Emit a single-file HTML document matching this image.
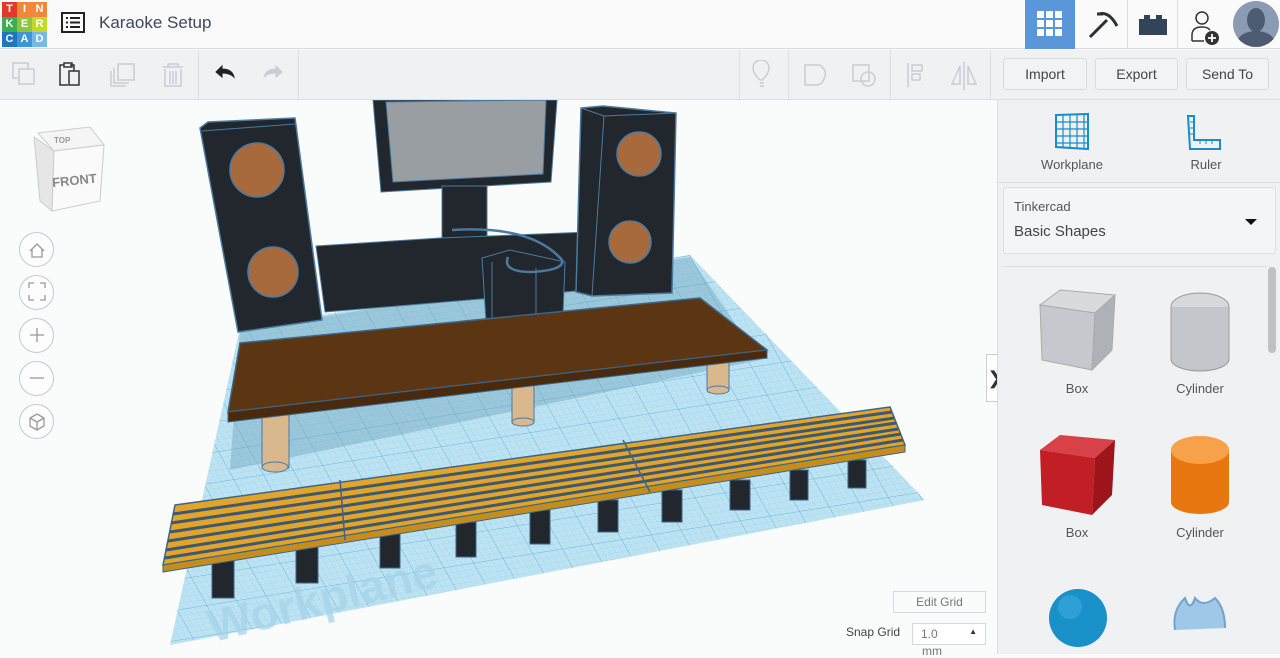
<!DOCTYPE html>
<html><head><meta charset="utf-8"><style>
*{box-sizing:border-box;margin:0;padding:0}
body{width:1280px;height:654px;overflow:hidden;font-family:"Liberation Sans",sans-serif;background:#fafbfb;position:relative;color:#333}
.hdr{position:absolute;left:0;top:0;width:1280px;height:49px;background:#fafafa;border-bottom:1px solid #d8dbdf}
.tb{position:absolute;left:0;top:50px;width:1280px;height:50px;background:#f0f1f3;border-bottom:1px solid #dadde1}
.sep{position:absolute;top:50px;width:1px;height:50px;background:#dcdfe3}
.btn{position:absolute;top:58px;height:32px;border:1px solid #d8dbe0;border-radius:3px;background:#f2f3f5;font-size:14px;color:#444;text-align:center;line-height:30px}
.rp{position:absolute;left:997px;top:100px;width:283px;height:554px;background:#f0f1f3;border-left:1px solid #dadde1}
.lbl{position:absolute;font-size:13px;color:#555;text-align:center;width:120px}
.nav{position:absolute;left:19px;width:35px;height:35px;border:1px solid #c5c9ce;border-radius:50%;background:#fdfdfd}
</style></head><body>
<div class="hdr"></div>
<div style="position:absolute;left:2px;top:2px;width:45px;height:45px;font:bold 11px 'Liberation Sans',sans-serif;color:#fff">
<div style="display:grid;grid-template-columns:repeat(3,15px);grid-template-rows:repeat(3,15px);text-align:center;line-height:15px">
<div style="background:#e2382b">T</div><div style="background:#f0873a">I</div><div style="background:#f0873a">N</div>
<div style="background:#3cae4f">K</div><div style="background:#8cc63f">E</div><div style="background:#c3d82b">R</div>
<div style="background:#1f75c0">C</div><div style="background:#3d95d6">A</div><div style="background:#76b9e6">D</div></div></div>
<svg style="position:absolute;left:61px;top:12px" width="24" height="22"><rect x="1" y="1" width="22" height="19" fill="none" stroke="#222" stroke-width="2"/><path d="M5 6h2M9 6h10M5 10.5h2M9 10.5h10M5 15h2M9 15h10" stroke="#222" stroke-width="2"/></svg>
<div style="position:absolute;left:99px;top:13px;font-size:17px;color:#3b4a5c">Karaoke Setup</div>
<div style="position:absolute;left:1025px;top:0;width:50px;height:49px;background:#5b96d8"></div>
<svg style="position:absolute;left:1037px;top:11px" width="26" height="26"><g fill="#fff"><rect x="0" y="0" width="7" height="7"/><rect x="9" y="0" width="7" height="7"/><rect x="18" y="0" width="7" height="7"/><rect x="0" y="9" width="7" height="7"/><rect x="9" y="9" width="7" height="7"/><rect x="18" y="9" width="7" height="7"/><rect x="0" y="18" width="7" height="7"/><rect x="9" y="18" width="7" height="7"/><rect x="18" y="18" width="7" height="7"/></g></svg>
<div style="position:absolute;left:1127px;top:0;width:1px;height:49px;background:#ddd"></div>
<div style="position:absolute;left:1177px;top:0;width:1px;height:49px;background:#ddd"></div>
<svg style="position:absolute;left:1085px;top:10px" width="34" height="30"><path d="M5 27L22 10M14 4q10-3 18 12M12 4l6 0" stroke="#2b2f36" stroke-width="3" fill="none"/></svg>
<svg style="position:absolute;left:1138px;top:13px" width="30" height="24"><path d="M1 6h5V2h6v4h6V2h6v4h5v16H1z" fill="#334458"/></svg>
<svg style="position:absolute;left:1190px;top:10px" width="36" height="36"><circle cx="12" cy="8" r="6" fill="none" stroke="#333" stroke-width="1.5"/><path d="M2 31v-6q0-8 10-8q6 0 8 3M2 31h12" fill="none" stroke="#333" stroke-width="1.5"/><circle cx="22" cy="28" r="7" fill="#333"/><path d="M22 24v8M18 28h8" stroke="#fff" stroke-width="1.8"/></svg>
<div style="position:absolute;left:1233px;top:1px;width:46px;height:46px;border-radius:50%;background:#8b9bb3;overflow:hidden"><div style="position:absolute;left:14px;top:7px;width:18px;height:24px;border-radius:50%;background:#4d5b70"></div><div style="position:absolute;left:4px;top:30px;width:38px;height:24px;border-radius:50%;background:#4d5b70"></div></div>

<div class="tb"></div>
<div class="sep" style="left:198px"></div><div class="sep" style="left:298px"></div><div class="sep" style="left:739px"></div><div class="sep" style="left:788px"></div><div class="sep" style="left:890px"></div><div class="sep" style="left:990px"></div>
<svg style="position:absolute;left:10px;top:60px" width="280" height="30" fill="none" stroke-width="1.5">
<rect x="3" y="3" width="15" height="15" stroke="#c8ced5"/><rect x="9" y="9" width="15" height="15" stroke="#c8ced5" fill="#f0f1f3"/>
<path d="M54 5h-4v20h8M60 5h4v6" stroke="#333"/><rect x="54" y="3" width="8" height="4" stroke="#333"/><rect x="59" y="11" width="10" height="14" stroke="#333"/>
<rect x="108" y="4" width="16" height="16" stroke="#c8ced5"/><path d="M104 8v15h15M101 11v15h15" stroke="#c8ced5"/>
<path d="M153 7h20M158 7v-3h10v3M155 9v17h16V9M160 11v13M163 11v13M166 11v13" stroke="#c8ced5"/>
<path d="M206 12l6-6v3q10 0 12 8q-4-4-12-4v4z" fill="#222" stroke="#222" stroke-width="1"/>
<path d="M272 12l-6-6v3q-10 0-12 8q4-4 12-4v4z" fill="#c8ced5" stroke="#c8ced5" stroke-width="1"/>
</svg>
<svg style="position:absolute;left:750px;top:60px" width="240" height="30" fill="none" stroke="#c8ced5" stroke-width="1.5">
<path d="M10 20q-7-6-7-12a8 8 0 0116 0q0 6-7 12zM10 23h4M10 26h4"/>
<path d="M55 5h15q8 6 4 14q-2 6-8 6h-11z"/>
<rect x="103" y="5" width="16" height="16"/><circle cx="118" cy="19" r="7"/>
<path d="M158 3v24M162 5h10v6h-10zM162 14h8v6h-8z"/>
<path d="M214 2v28M210 6l-8 18h8zM218 6l8 18h-8z"/>
</svg>
<div class="btn" style="left:1003px;width:84px">Import</div>
<div class="btn" style="left:1095px;width:83px">Export</div>
<div class="btn" style="left:1186px;width:83px">Send To</div>

<svg style="position:absolute;left:0;top:100px" width="997" height="554" viewBox="0 100 997 554">
<defs>
<pattern id="g" width="6" height="6" patternUnits="userSpaceOnUse" patternTransform="rotate(-9) skewX(20)"><path d="M6 0H0V6" fill="none" stroke="#8ccbe5" stroke-width="0.5"/></pattern>
<pattern id="gb" width="30" height="30" patternUnits="userSpaceOnUse" patternTransform="rotate(-9) skewX(20)"><path d="M30 0H0V30" fill="none" stroke="#5aaed4" stroke-width="0.8"/></pattern>
</defs>
<polygon points="170,645 240,328 690,255 925,500" fill="#bde3f3"/>
<polygon points="170,645 240,328 690,255 925,500" fill="url(#g)"/>
<polygon points="170,645 240,328 690,255 925,500" fill="url(#gb)"/>
<polygon points="240,330 690,257 760,360 230,470" fill="#6fa4bd" opacity="0.45"/>
<text x="205" y="620" font-size="46" font-weight="bold" fill="#a6d3e8" opacity="0.7" transform="rotate(-14 300 600)">Workplane</text>
<polygon points="200,128 208,122 295,118 322,320 238,332" fill="#22272d" stroke="#4a7aa0" stroke-width="1.5"/>
<path d="M202 131L295 124" stroke="#4a7aa0"/>
<circle cx="257" cy="170" r="27" fill="#a86a3c" stroke="#4a7aa0" stroke-width="1.5"/>
<circle cx="273" cy="272" r="25" fill="#a86a3c" stroke="#4a7aa0" stroke-width="1.5"/>
<polygon points="373,100 557,100 551,182 381,192" fill="#22272d" stroke="#4a7aa0"/>
<polygon points="386,102 546,100 543,174 393,182" fill="#999ea3" stroke="#4a7aa0"/>
<rect x="442" y="186" width="45" height="60" fill="#22272d" stroke="#4a7aa0"/>
<polygon points="316,246 440,238 588,232 588,290 325,312" fill="#22272d" stroke="#4a7aa0"/>
<polygon points="581,108 603,106 676,113 672,293 592,296 576,292" fill="#22272d" stroke="#4a7aa0" stroke-width="1.5"/>
<path d="M581 108L604 116L676 113M604 116L592 296" stroke="#4a7aa0" fill="none"/>
<circle cx="639" cy="154" r="22" fill="#a86a3c" stroke="#4a7aa0" stroke-width="1.5"/>
<circle cx="630" cy="242" r="21" fill="#a86a3c" stroke="#4a7aa0" stroke-width="1.5"/>
<polygon points="482,258 510,250 565,262 563,316 486,322" fill="#22272d" stroke="#4a7aa0"/>
<path d="M492 262L492 322M536 268L536 318" stroke="#4a7aa0"/>
<path d="M452 230q80-5 110 30q3 10-30 12q-30 0-24-15" fill="none" stroke="#4a7aa0" stroke-width="2.5"/>
<rect x="262" y="415" width="27" height="53" fill="#d9b88e" stroke="#4a7aa0"/><ellipse cx="275" cy="467" rx="13" ry="5" fill="#d9b88e" stroke="#4a7aa0"/>
<rect x="512" y="380" width="22" height="42" fill="#d9b88e" stroke="#4a7aa0"/><ellipse cx="523" cy="422" rx="11" ry="4" fill="#d9b88e" stroke="#4a7aa0"/>
<rect x="707" y="355" width="22" height="35" fill="#d9b88e" stroke="#4a7aa0"/><ellipse cx="718" cy="390" rx="11" ry="4" fill="#d9b88e" stroke="#4a7aa0"/>
<polygon points="240,343 700,298 767,350 228,412" fill="#5c3513" stroke="#3d6587" stroke-width="1.5"/>
<polygon points="228,412 767,350 767,358 228,422" fill="#4a2a0e" stroke="#3d6587"/>
<g fill="#22272d" stroke="#3d6587">
<rect x="212" y="558" width="22" height="40"/><rect x="296" y="545" width="22" height="38"/><rect x="380" y="532" width="20" height="36"/><rect x="456" y="522" width="20" height="35"/><rect x="530" y="510" width="20" height="34"/><rect x="598" y="500" width="20" height="32"/><rect x="662" y="490" width="20" height="32"/><rect x="730" y="480" width="20" height="30"/><rect x="790" y="470" width="18" height="30"/><rect x="848" y="460" width="18" height="28"/>
</g>
<polygon points="175,505 890,407 905,445 163,565" fill="#e0a52a" stroke="#3d6587" stroke-width="1.5"/>
<g stroke="#3e5870" stroke-width="3">
<line x1="173" y1="514" x2="892" y2="412"/><line x1="171" y1="523" x2="894" y2="418"/><line x1="170" y1="532" x2="896" y2="423"/><line x1="168" y1="541" x2="898" y2="429"/><line x1="166" y1="550" x2="901" y2="434"/><line x1="165" y1="558" x2="903" y2="440"/>
</g>
<polygon points="163,565 905,445 905,452 163,572" fill="#c58d1d" stroke="#3d6587"/>
<line x1="340" y1="480" x2="345" y2="540" stroke="#3d6587" stroke-width="1.5"/>
<line x1="623" y1="440" x2="650" y2="492" stroke="#3d6587" stroke-width="1.5"/>
</svg>

<svg style="position:absolute;left:28px;top:125px" width="80" height="90"><polygon points="10,8 62,2 76,20 26,26" fill="#f5f5f5" stroke="#ccc"/><polygon points="6,12 26,26 24,86 12,76" fill="#e6e6e6" stroke="#ccc"/><polygon points="26,26 76,20 72,76 24,86" fill="#fafafa" stroke="#ccc"/><text x="26" y="18" font-size="8" fill="#999" font-weight="bold">TOP</text><text x="24" y="60" font-size="13" fill="#888" font-weight="bold" transform="rotate(-6 45 55)">FRONT</text></svg>
<div class="nav" style="top:232px"></div><div class="nav" style="top:275px"></div><div class="nav" style="top:318px"></div><div class="nav" style="top:361px"></div><div class="nav" style="top:404px"></div>
<svg style="position:absolute;left:19px;top:232px" width="36" height="210" fill="none" stroke="#999" stroke-width="1.3">
<path d="M11 19l7-7 7 7M13 17v8h10v-8"/>
<path d="M10 56v-5h5M26 56v-5h-5M10 63v5h5M26 63v5h-5"/>
<path d="M18 96v14M11 103h14"/><path d="M11 146h14"/>
<path d="M18 182l7 4v8l-7 4-7-4v-8zM11 186l7 4 7-4M18 190v8"/>
</svg>
<div style="position:absolute;left:986px;top:354px;width:18px;height:48px;background:#fff;border:1px solid #ccc;font-size:18px;line-height:46px;text-align:center;color:#333">❯</div>
<div style="position:absolute;left:893px;top:591px;width:93px;height:22px;border:1px solid #d5d8dc;background:#fafbfb;font-size:12px;color:#777;text-align:center;line-height:20px">Edit Grid</div>
<div style="position:absolute;left:846px;top:625px;font-size:12px;color:#444">Snap Grid</div>
<div style="position:absolute;left:912px;top:623px;width:74px;height:22px;border:1px solid #d5d8dc;background:#fff;font-size:12px;color:#777;padding:3px 8px">1.0<span style="float:right;font-size:8px;color:#333">▲</span></div>
<div style="position:absolute;left:922px;top:644px;font-size:12px;color:#777">mm</div>

<div class="rp"></div>
<svg style="position:absolute;left:1054px;top:113px" width="36" height="38" fill="none" stroke="#1a8cc8" stroke-width="1.2"><path d="M2 2l32-1v35l-32-2z" stroke-width="2"/><path d="M9 2v32M16 2v33M23 1v34M30 1v34M2 9h32M2 16h32M2 23h32M2 30h32"/></svg>
<svg style="position:absolute;left:1186px;top:114px" width="40" height="38" fill="none" stroke="#1a8cc8" stroke-width="2"><path d="M2 2h6v24h26v9H4z"/><path d="M4 8h3M4 14h3M4 20h3M14 27v3M20 27v3M26 27v3" stroke-width="1"/></svg>
<div class="lbl" style="left:1012px;top:157px">Workplane</div>
<div class="lbl" style="left:1146px;top:157px">Ruler</div>
<div style="position:absolute;left:998px;top:182px;width:282px;height:1px;background:#dcdfe3"></div>
<div style="position:absolute;left:1003px;top:187px;width:273px;height:67px;background:#f4f5f7;border:1px solid #dcdfe3;border-radius:3px"></div>
<div style="position:absolute;left:1014px;top:199px;font-size:13px;color:#555">Tinkercad</div>
<div style="position:absolute;left:1014px;top:223px;font-size:15px;color:#444">Basic Shapes</div>
<div style="position:absolute;left:1245px;top:219px;width:0;height:0;border-left:6px solid transparent;border-right:6px solid transparent;border-top:6px solid #111"></div>
<div style="position:absolute;left:1003px;top:266px;width:265px;height:1px;background:#dcdfe3"></div>
<div style="position:absolute;left:1268px;top:267px;width:8px;height:86px;background:#c1c1c1;border-radius:4px"></div>
<svg style="position:absolute;left:1030px;top:285px" width="240" height="369">
<polygon points="10,20 30,5 85,10 65,28" fill="#d8dadd" stroke="#aaa"/><polygon points="10,20 65,28 62,85 12,75" fill="#c5c8cc" stroke="#aaa"/><polygon points="65,28 85,10 82,65 62,85" fill="#aeb2b7" stroke="#aaa"/>
<ellipse cx="170" cy="22" rx="29" ry="14" fill="#d6d8db" stroke="#999"/><path d="M141 22v52a29 12 0 0 0 58 0V22" fill="#c3c6ca" stroke="#999"/>
<polygon points="10,165 30,150 85,155 65,173" fill="#d84148"/><polygon points="10,165 65,173 62,230 12,220" fill="#c11e25"/><polygon points="65,173 85,155 82,210 62,230" fill="#9d141b"/>
<ellipse cx="170" cy="165" rx="29" ry="14" fill="#f59a3b"/><path d="M141 165v52a29 12 0 0 0 58 0V165" fill="#e8770f"/><ellipse cx="170" cy="165" rx="29" ry="14" fill="#f7a24a"/>
<circle cx="48" cy="333" r="29" fill="#1a90c8"/><circle cx="40" cy="322" r="12" fill="#3aaee0" opacity=".6"/>
<path d="M145 345q-3-20 10-32q5 15 10 0q8 10 20 0q10 10 10 30" fill="#9fc8e8" stroke="#6fa4cd" stroke-width="2"/>
</svg>
<div class="lbl" style="left:1017px;top:381px">Box</div>
<div class="lbl" style="left:1140px;top:381px">Cylinder</div>
<div class="lbl" style="left:1017px;top:525px">Box</div>
<div class="lbl" style="left:1140px;top:525px">Cylinder</div>
</body></html>
